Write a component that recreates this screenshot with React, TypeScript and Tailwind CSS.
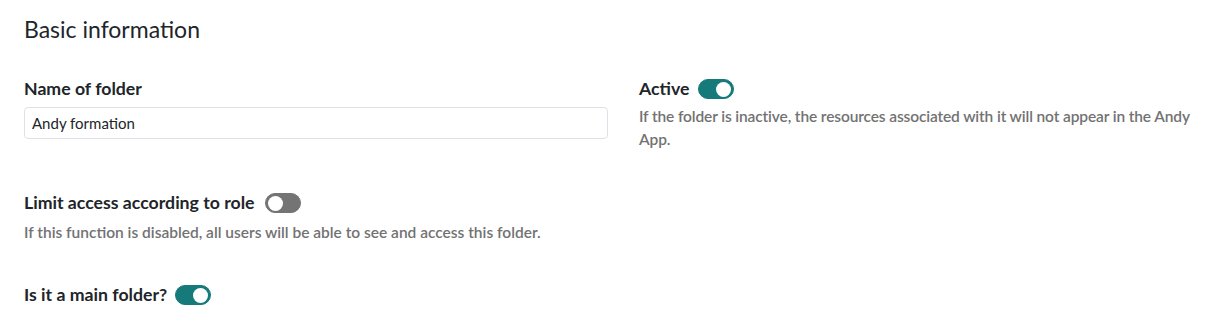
import { useState } from 'react';

function Toggle({ on, onChange }: { on: boolean; onChange: () => void }) {
  return (
    <button
      type="button"
      onClick={onChange}
      className={`flex h-[20px] w-[36px] shrink-0 items-center rounded-full border px-[2px] ${
        on ? 'justify-end border-[#167a7a] bg-[#167a7a]' : 'justify-start border-[#747474] bg-[#747474]'
      }`}
    >
      <span className="block h-[15px] w-[15px] rounded-full bg-white" />
    </button>
  );
}

export default function App() {
  const [active, setActive] = useState(true);
  const [limit, setLimit] = useState(false);
  const [main, setMain] = useState(true);

  return (
    <div className="min-h-[331px] bg-white px-6 text-[#212529]" style={{ fontFamily: 'Lato, "Noto Sans", sans-serif' }}>
      {/* Title */}
      <h2 className="pt-[14px] text-[23px] leading-[30px] font-normal">Basic information</h2>

      <div className="mt-[34px] grid grid-cols-[584px_1fr] gap-x-[31px]">
        {/* Name */}
        <div>
          <label className="block text-[17.7px] leading-[22px] font-bold">Name of folder</label>
          <input
            defaultValue="Andy formation"
            className="mt-[7px] h-[32px] w-full rounded-[4px] border border-[#dee2e6] px-[7px] text-[15px] text-[#212529] outline-none"
          />
        </div>

        {/* Active */}
        <div>
          <div className="flex items-center gap-[9px]">
            <span className="text-[17.7px] leading-[22px] font-bold">Active</span>
            <Toggle on={active} onChange={() => setActive(!active)} />
          </div>
          <p className="mt-[5px] text-[15.5px] leading-[23px] font-semibold tracking-[-0.12px] text-[#727272]">
            If the folder is inactive, the resources associated with it will not appear in the Andy App.
          </p>
        </div>
      </div>

      {/* Limit access */}
      <div className="mt-[41px]">
        <div className="flex items-center gap-[10px]">
          <span className="text-[17.7px] leading-[22px] font-bold">Limit access according to role</span>
          <Toggle on={limit} onChange={() => setLimit(!limit)} />
        </div>
        <p className="mt-[7px] text-[15.5px] leading-[23px] font-semibold text-[#727272]">
          If this function is disabled, all users will be able to see and access this folder.
        </p>
      </div>

      {/* Main folder */}
      <div className="mt-[40px] flex items-center gap-[8px]">
        <span className="text-[17.7px] leading-[22px] font-bold">Is it a main folder?</span>
        <Toggle on={main} onChange={() => setMain(!main)} />
      </div>
    </div>
  );
}
